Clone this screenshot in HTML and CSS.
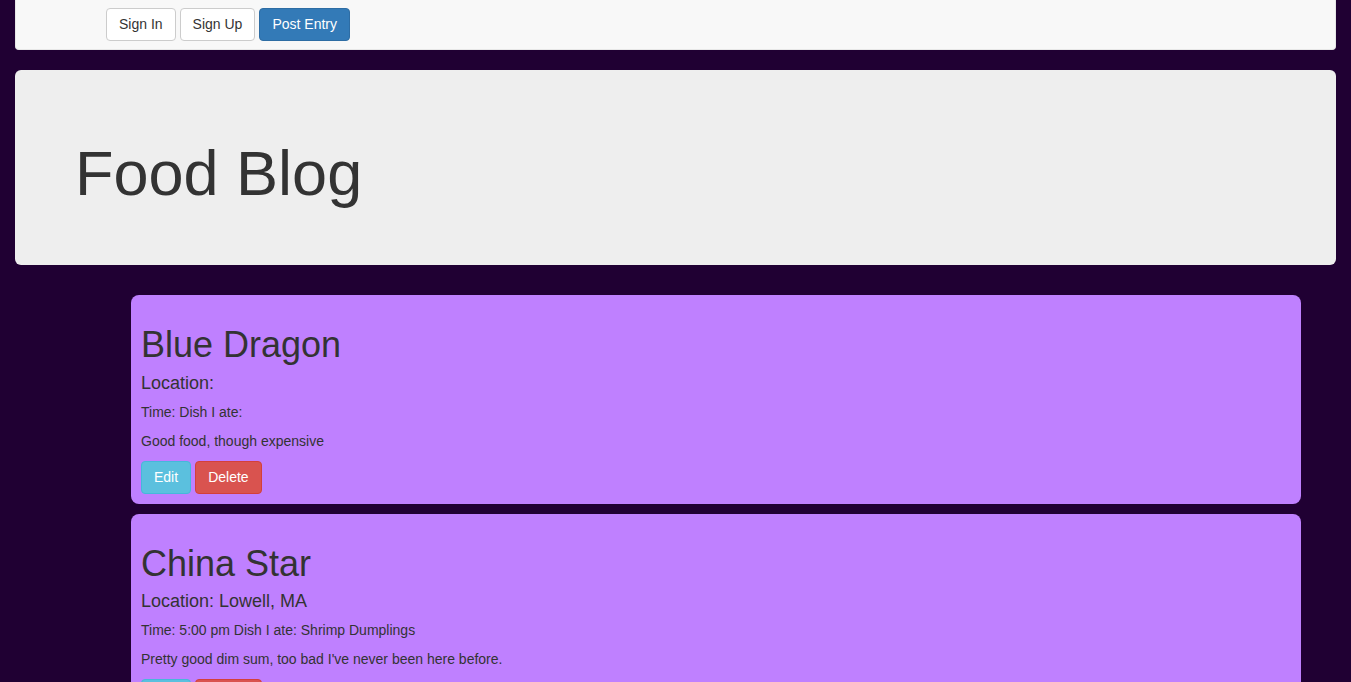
FILE: index.html
```html
<!DOCTYPE html>
<html lang="en">
<head>
<meta charset="utf-8">
<title>Food Blog</title>
<link rel="stylesheet" href="styles.css">
</head>
<body>
<div class="page">
  <nav class="navbar">
    <button class="btn btn-default">Sign In</button>
    <button class="btn btn-default">Sign Up</button>
    <button class="btn btn-primary">Post Entry</button>
  </nav>
  <header class="jumbotron">
    <h1>Food Blog</h1>
  </header>
  <main class="entries">
    <article class="entry">
      <h1>Blue Dragon</h1>
      <h4>Location: </h4>
      <p>Time:  Dish I ate: </p>
      <p>Good food, though expensive</p>
      <div class="actions">
        <button class="btn btn-info">Edit</button>
        <button class="btn btn-danger">Delete</button>
      </div>
    </article>
    <article class="entry">
      <h1>China Star</h1>
      <h4>Location: Lowell, MA</h4>
      <p>Time: 5:00 pm Dish I ate: Shrimp Dumplings</p>
      <p>Pretty good dim sum, too bad I've never been here before.</p>
      <div class="actions">
        <button class="btn btn-info">Edit</button>
        <button class="btn btn-danger">Delete</button>
      </div>
    </article>
  </main>
</div>
</body>
</html>
```

FILE: styles.css
```css
* { box-sizing: border-box; }
html, body { margin: 0; padding: 0; }
body {
  background: #200033;
  font-family: "Liberation Sans", Arial, sans-serif;
  font-size: 14px;
  line-height: 1.42857;
  color: #333;
  overflow: hidden;
}
.page {
  padding: 0 15px;
}
.navbar {
  height: 50px;
  background: #f8f8f8;
  border: 1px solid #e7e7e7;
  border-top: none;
  border-radius: 0 0 4px 4px;
  margin-bottom: 20px;
  padding: 8px 0 0 90px;
  display: flex;
  gap: 4px;
  align-items: flex-start;
}
.btn {
  font-family: inherit;
  font-size: 14px;
  line-height: 19px;
  padding: 6px 12px;
  border: 1px solid transparent;
  border-radius: 4px;
  height: 33px;
  cursor: pointer;
}
.btn-default { background: #fff; border-color: #ccc; color: #333; }
.btn-primary { background: #337ab7; border-color: #2e6da4; color: #fff; }
.btn-info { background: #5bc0de; border-color: #46b8da; color: #fff; }
.btn-danger { background: #d9534f; border-color: #d43f3a; color: #fff; }

.jumbotron {
  background: #eee;
  border-radius: 6px;
  padding: 48px 60px 47px;
  margin-bottom: 30px;
}
.jumbotron h1 {
  margin: 21px 0 10px;
  font-size: 63px;
  line-height: 1.1;
  font-weight: 500;
  color: #333;
}
.entries {
  margin-left: 116px;
  width: 1170px;
  display: flex;
  flex-direction: column;
  gap: 10px;
}
.entry {
  background: #bf80ff;
  border-radius: 8px;
  padding: 10px 10px 10px;
}
.entry h1 {
  font-size: 36px;
  line-height: 1.1;
  font-weight: 500;
  margin: 20px 0 9px;
}
.entry h4 {
  font-size: 18px;
  line-height: 1.1;
  font-weight: 500;
  margin: 9px 0 9px;
}
.entry p {
  margin: 0 0 9px;
}
.actions {
  display: flex;
  gap: 4px;
}
```
